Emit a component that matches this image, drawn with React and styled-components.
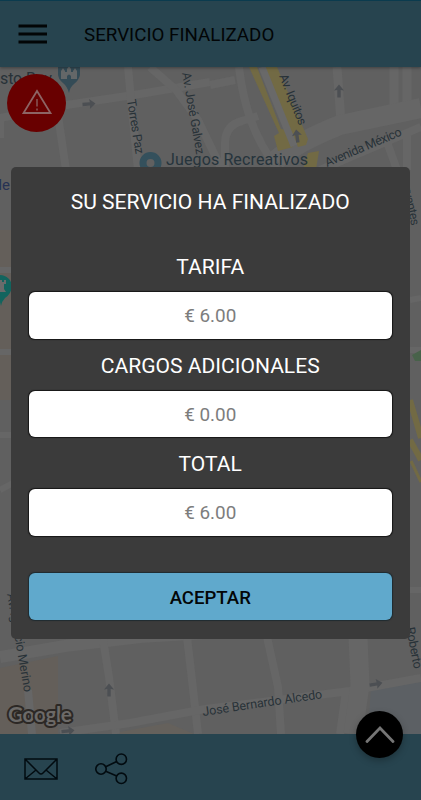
import React from "react";
import styled, { createGlobalStyle } from "styled-components";

const GlobalStyle = createGlobalStyle`
  * { box-sizing: border-box; }
  body { margin: 0; font-family: Roboto, "Liberation Sans", sans-serif; }
`;

const Screen = styled.main`
  position: relative;
  display: flex;
  flex-direction: column;
  width: 421px;
  height: 800px;
  overflow: hidden;
  background: #616161;
`;

const Header = styled.header`
  position: relative;
  z-index: 1;
  display: flex;
  align-items: center;
  gap: 37px;
  height: 67px;
  padding: 0 18px 1px;
  border-top: 1px solid #0b3b4e;
  background: #27444f;
  box-shadow: 0 1px 3px rgba(0, 0, 0, 0.35);
`;

const IconButton = styled.button`
  display: flex;
  padding: 0;
  border: 0;
  background: none;
  color: #020b10;
`;

const PageTitle = styled.h1`
  margin: 2px 0 0;
  color: #020506;
  font-size: 18.75px;
  font-weight: 400;
  line-height: 24px;
  white-space: nowrap;
`;

const MapArea = styled.section`
  position: relative;
  height: 667px;
`;

const MapDrawing = styled.svg`
  display: block;
  width: 421px;
  height: 667px;
  font-family: Roboto, sans-serif;
`;

const AlertButton = styled.button`
  position: absolute;
  top: 7px;
  left: 7px;
  display: grid;
  place-items: center;
  width: 59px;
  height: 58px;
  padding: 0 0 3px;
  border: 0;
  border-radius: 50%;
  background: #680000;
`;

const Footer = styled.footer`
  display: flex;
  align-items: center;
  gap: 37px;
  height: 66px;
  padding: 4px 24px 0;
  background: #27444f;
`;

const ExpandButton = styled.button`
  position: absolute;
  top: 711px;
  left: 356px;
  display: grid;
  place-items: center;
  width: 47px;
  height: 47px;
  padding: 0;
  border: 0;
  border-radius: 50%;
  background: #000;
  box-shadow: 0 3px 7px rgba(0, 0, 0, 0.25);
`;

const Dialog = styled.section`
  position: absolute;
  z-index: 2;
  top: 167px;
  left: 11px;
  display: flex;
  flex-direction: column;
  width: 399px;
  height: 472px;
  padding: 20px 18.5px 0 18px;
  border-radius: 5px;
  background: #3b3b3b;
`;

const DialogTitle = styled.h2`
  margin: 0 0 38px;
  color: #fff;
  font-size: 21.05px;
  font-weight: 400;
  line-height: 29px;
  height: 28px;
  text-align: center;
`;

const Field = styled.label`
  display: flex;
  flex-direction: column;
  height: 98.6px;
`;

const FieldName = styled.span`
  height: 39px;
  color: #fff;
  font-size: 21.05px;
  line-height: 28px;
  text-align: center;
`;

const FieldValue = styled.output`
  display: block;
  height: 46.5px;
  border-radius: 6px;
  background: #fff;
  box-shadow: 0 0 1px 0.5px #171717;
  color: #7d7d7d;
  font-size: 18.9px;
  line-height: 48px;
  text-align: center;
`;

const AcceptButton = styled.button`
  flex: none;
  height: 46.5px;
  margin-top: 24.5px;
  padding: 2px 0 0;
  border: 0;
  border-radius: 6px;
  background: #60a9cc;
  box-shadow: 0 0 1px 0.5px #202c31;
  color: #030607;
  font: 500 18.6px Roboto, sans-serif;
`;

const fields = [
  { name: "TARIFA", value: "€ 6.00" },
  { name: "CARGOS ADICIONALES", value: "€ 0.00" },
  { name: "TOTAL", value: "€ 6.00" },
];

function DirectionArrow({ x, y, angle = 0 }) {
  return (
    <path
      transform={`translate(${x} ${y}) rotate(${angle})`}
      d="M0-6.5 5-.5 1.7-1V6.5H-1.7V-1L-5-.5Z"
      fill="#4c4f53"
    />
  );
}

function CityMap() {
  return (
    <MapDrawing viewBox="0 67 421 667">
      <rect y="67" width="421" height="667" fill="#606060" />
      <path d="M0 230H12V400H0ZM0 668 58 656V734H0Z" fill="#645f5a" />
      <path d="M120 732 168 723 194 734H120Z" fill="#65615c" />
      <path d="M371 688 421 682V734H368Z" fill="#5c6064" />
      <g fill="none" stroke="#666" strokeWidth="8">
        <path d="M0 118 60 106 140 94 210 82" />
        <path d="M0 138V118M128 67 131 100 138 170M58 115 66 170M150 67 176 90 198 120 222 170" />
        <path d="M210 85 235 80M225 170V142Q226 125 242 121L258 116M239 67Q244 112 262 145L277 170" />
        <path d="M337 67 341 122M394 67V117M407 67V110" strokeWidth="9" />
        <path d="M276 160Q295 143 340 125L421 108" strokeWidth="20" />
        <path d="M320 170 421 127M386 139 397 170M407 133V170" />
        <path d="M0 270H11M0 352H11M0 435H11M0 490 15 482M410 300 421 298M410 350H421M410 590H421" strokeWidth="6" />
        <path d="M0 657 65 646 140 637 220 632" strokeWidth="12" />
        <path d="M103 639 109 677 116 734M187 637 192 680 198 734M267 637 278 687 281 734" />
        <path d="M60 733 130 723 205 709M205 709 350 691 421 678M346 691 340 734" />
        <path d="M358 637 360 685 353 734" strokeWidth="19" />
        <path d="M28 690 32 734" />
      </g>
      <g fill="#726a44">
        <path d="M249 67H257L281 129 287 130 293 147 278 151 274 136 279 133Z" />
        <path d="M263 67H277L308 139 306 145 298 147Z" />
        <path d="M308 153 319 151 316 169H303Z" />
      </g>
      <path d="M262 67 294 146" fill="none" stroke="#696969" strokeWidth="7" />
      <path d="M410 400 421 438M410 440 421 460" fill="none" stroke="#726a44" strokeWidth="6" />
      <path d="M411 461 421 482" stroke="#726a44" strokeWidth="3" />
      <path d="M412 355 421 350V361L415 361Z" fill="#48624a" />
      <DirectionArrow x={89} y={104} angle={85} />
      <DirectionArrow x={339} y={91} />
      <DirectionArrow x={297} y={136} angle={-8} />
      <DirectionArrow x={109} y={690} />
      <DirectionArrow x={68} y={731} angle={84} />
      <DirectionArrow x={376} y={684} angle={80} />

      <path d="M58 67H80V75Q79 80 74 84 70 87 69 93 67 86 63 83 58 79 58 74Z" fill="#344b56" />
      <path d="M61 79V71L63 68 65 71V72H67V69L69 66 71 69V72H73V71L75 68 77 71V79H71V76Q69 73 67 76V79Z" fill="#646768" />
      <circle cx="150.5" cy="163" r="7.5" fill="none" stroke="#34505c" strokeWidth="7" />
      <path d="M0 275A12 12 0 0 1 12 287Q11 294 5 298 2 301 1 306L0 302Z" fill="#12645e" />
      <path d="M0 280H2V282H4V280H6V284H4V289L6 292H0Z" fill="#696b6b" />

      <g fill="#283238" fontSize="12.5">
        <text x="0" y="84" fontSize="16" textLength="52">sto Bav</text>
        <text x="-6.5" y="190" fontSize="15" fill="#263253">de</text>
        <text x="166" y="165" fontSize="16" textLength="142" fill="#26343c">Juegos Recreativos</text>
        <text transform="translate(127 100) rotate(81)" textLength="55">Torres Paz</text>
        <text transform="translate(182 73) rotate(80)" textLength="83">Av. José Galvez</text>
        <text transform="translate(279 76) rotate(68)" textLength="54">Av. Iquitos</text>
        <text transform="translate(327 167) rotate(-23)" textLength="82">Avenida México</text>
        <text transform="translate(403 189) rotate(77)" textLength="38">rvantes</text>
        <text transform="translate(7 594) rotate(80)" textLength="100">Av. Ignacio Merino</text>
        <text transform="translate(406 628) rotate(79)" textLength="42">Roberto</text>
        <text transform="translate(203 716) rotate(-8.5)" textLength="121">José Bernardo Alcedo</text>
      </g>
      <text
        x="8" y="721.5" fontFamily="Lato, sans-serif" fontSize="21" fontWeight="700"
        textLength="64" lengthAdjust="spacing" fill="#6c6a68"
        stroke="#2c2825" strokeWidth="4" strokeLinejoin="round" paintOrder="stroke"
      >
        Google
      </text>
    </MapDrawing>
  );
}

export default function App() {
  return (
    <>
      <GlobalStyle />
      <Screen>
        <Header>
          <IconButton aria-label="Menú">
            <svg width="29" height="20" viewBox="0 0 29 20" stroke="#020506" strokeWidth="3">
              <path d="M.5 2H29M.5 10H29M.5 18H29" />
            </svg>
          </IconButton>
          <PageTitle>SERVICIO FINALIZADO</PageTitle>
        </Header>
        <MapArea>
          <CityMap />
          <AlertButton aria-label="Alerta">
            <svg width="32" height="27" viewBox="0 0 32 27" fill="none" stroke="#8d6464" strokeWidth="1.8">
              <path d="M16 3 2.5 25H29.5Z" />
              <path d="M16 11V18.5M16 20.5V22.5" strokeWidth="1.3" />
            </svg>
          </AlertButton>
        </MapArea>
        <Footer>
          <IconButton aria-label="Mensajes">
            <svg width="34" height="22" viewBox="0 0 34 22" fill="none" stroke="currentColor" strokeWidth="1.5">
              <path d="M1 1H33V21H1ZM1 1 15 15Q17 17 19 15L33 1M1 21 12 12M33 21 22 12" />
            </svg>
          </IconButton>
          <IconButton aria-label="Compartir">
            <svg width="33" height="32" viewBox="0 0 33 32" fill="none" stroke="currentColor" strokeWidth="1.6">
              <circle cx="6" cy="16" r="5.2" />
              <circle cx="26.3" cy="6.2" r="5.2" />
              <circle cx="26.3" cy="25.3" r="5.2" />
              <path d="M10.7 13.7 21.7 8.5M10.7 18.3 21.7 23" />
            </svg>
          </IconButton>
        </Footer>
        <ExpandButton aria-label="Mostrar más">
          <svg width="30" height="18" viewBox="0 0 30 18" fill="none" stroke="#757575" strokeWidth="2.8" strokeLinecap="round">
            <path d="M2 15.5 15 2 28 15.5" />
          </svg>
        </ExpandButton>
        <Dialog role="dialog" aria-labelledby="dialog-title">
          <DialogTitle id="dialog-title">SU SERVICIO HA FINALIZADO</DialogTitle>
          {fields.map(({ name, value }) => (
            <Field key={name}>
              <FieldName>{name}</FieldName>
              <FieldValue>{value}</FieldValue>
            </Field>
          ))}
          <AcceptButton>ACEPTAR</AcceptButton>
        </Dialog>
      </Screen>
    </>
  );
}
